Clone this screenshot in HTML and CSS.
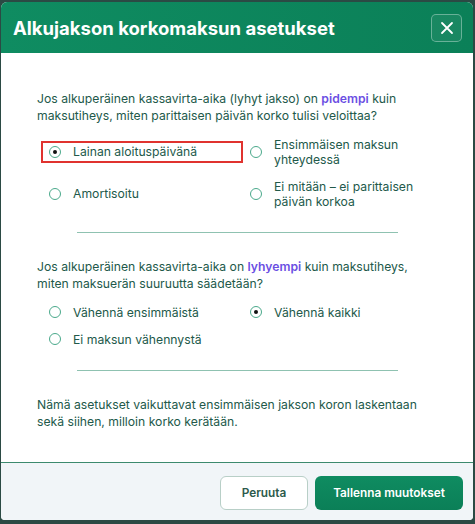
FILE: index.html
```html
<!DOCTYPE html>
<html lang="fi">
<head>
<meta charset="utf-8">
<title>Alkujakson korkomaksun asetukset</title>
<link rel="stylesheet" href="styles.css">
</head>
<body>
<div class="modal">
  <header class="modal-header">
    <h1 class="modal-title">Alkujakson korkomaksun asetukset</h1>
    <button class="close-btn" aria-label="Sulje">
      <svg width="14" height="14" viewBox="0 0 14 14"><path d="M2 2 L12 12 M12 2 L2 12" stroke="#fff" stroke-width="1.8" stroke-linecap="round"/></svg>
    </button>
  </header>
  <main class="modal-body">
    <section class="group">
      <p class="question">Jos alkuperäinen kassavirta-aika (lyhyt jakso) on <strong class="hl">pidempi</strong> kuin maksutiheys, miten parittaisen päivän korko tulisi veloittaa?</p>
      <div class="options">
        <label class="option highlighted"><span class="radio checked"></span><span class="label">Lainan aloituspäivänä</span></label>
        <label class="option"><span class="radio"></span><span class="label">Ensimmäisen maksun yhteydessä</span></label>
        <label class="option"><span class="radio"></span><span class="label">Amortisoitu</span></label>
        <label class="option"><span class="radio"></span><span class="label">Ei mitään – ei parittaisen päivän korkoa</span></label>
      </div>
    </section>
    <hr class="divider">
    <section class="group">
      <p class="question">Jos alkuperäinen kassavirta-aika on <strong class="hl">lyhyempi</strong> kuin maksutiheys, miten maksuerän suuruutta säädetään?</p>
      <div class="options">
        <label class="option"><span class="radio"></span><span class="label">Vähennä ensimmäistä</span></label>
        <label class="option"><span class="radio checked"></span><span class="label">Vähennä kaikki</span></label>
        <label class="option"><span class="radio"></span><span class="label">Ei maksun vähennystä</span></label>
      </div>
    </section>
    <hr class="divider">
    <p class="note">Nämä asetukset vaikuttavat ensimmäisen jakson koron laskentaan sekä siihen, milloin korko kerätään.</p>
  </main>
  <footer class="modal-footer">
    <button class="btn btn-secondary">Peruuta</button>
    <button class="btn btn-primary">Tallenna muutokset</button>
  </footer>
</div>
</body>
</html>
```
FILE: styles.css
```css
* { box-sizing: border-box; }
html, body { margin: 0; padding: 0; }
body {
  background: #2b4a44;
  font-family: Inter, "Noto Sans", "Liberation Sans", sans-serif;
  width: 475px;
  height: 524px;
  overflow: hidden;
}
.modal {
  margin: 2px 0 0 1px;
  width: 472px;
  height: 518px;
  background: #fff;
  border-radius: 6px 6px 4px 4px;
  overflow: hidden;
  display: flex;
  flex-direction: column;
}
.modal-header {
  height: 51px;
  flex: none;
  background: linear-gradient(90deg, #0f8c61, #0b8058);
  display: flex;
  align-items: center;
  justify-content: space-between;
  padding: 0 11px 0 12px;
}
.modal-title {
  margin: 0;
  color: #fff;
  font-size: 18.5px;
  font-weight: 700;
}
.close-btn {
  width: 31px;
  height: 28px;
  border: 1px solid rgba(255,255,255,0.35);
  border-radius: 5px;
  background: rgba(255,255,255,0.06);
  display: flex;
  align-items: center;
  justify-content: center;
  padding: 0;
  margin-top: 1px;
}
.modal-body {
  flex: 1;
  padding: 37px 36px 0 36px;
  color: #22594a;
  font-size: 12.2px;
}
.question, .note {
  margin: 0;
  line-height: 17px;
}
.hl {
  color: #6b4fe3;
  font-weight: 600;
}
.options {
  display: grid;
  grid-template-columns: 198px 198px;
  column-gap: 3px;
  row-gap: 9px;
  align-items: center;
  margin: 11px 0 0 6px;
}
.option {
  display: flex;
  align-items: center;
  gap: 12px;
  padding: 1.5px 6px;
  line-height: 15px;
}
.option.highlighted {
  outline: 2px solid #e0332f;
}
.radio {
  flex: none;
  width: 12px;
  height: 12px;
  border: 1.2px solid #4aa98b;
  border-radius: 50%;
  display: flex;
  align-items: center;
  justify-content: center;
}
.radio.checked::after {
  content: "";
  width: 4px;
  height: 4px;
  border-radius: 50%;
  background: #111;
}
.divider {
  width: 321px;
  margin: 22px auto 25px auto;
  border: none;
  border-top: 1px solid #8fc2b1;
}
.modal-footer {
  flex: none;
  height: 58px;
  border-top: 1px solid #3c8a6e;
  background: #f1f5f8;
  display: flex;
  justify-content: flex-end;
  align-items: flex-start;
  gap: 7px;
  padding: 13px 10px 0 0;
}
.btn {
  height: 34px;
  border-radius: 6px;
  font-family: inherit;
  font-size: 11.8px;
  font-weight: 600;
}
.btn-secondary {
  width: 88px;
  background: #fff;
  border: 1px solid #b8cfc7;
  color: #2c5a4b;
}
.btn-primary {
  width: 148px;
  border: none;
  background: linear-gradient(180deg, #0f8c61, #0b7f57);
  color: #fff;
}
```
